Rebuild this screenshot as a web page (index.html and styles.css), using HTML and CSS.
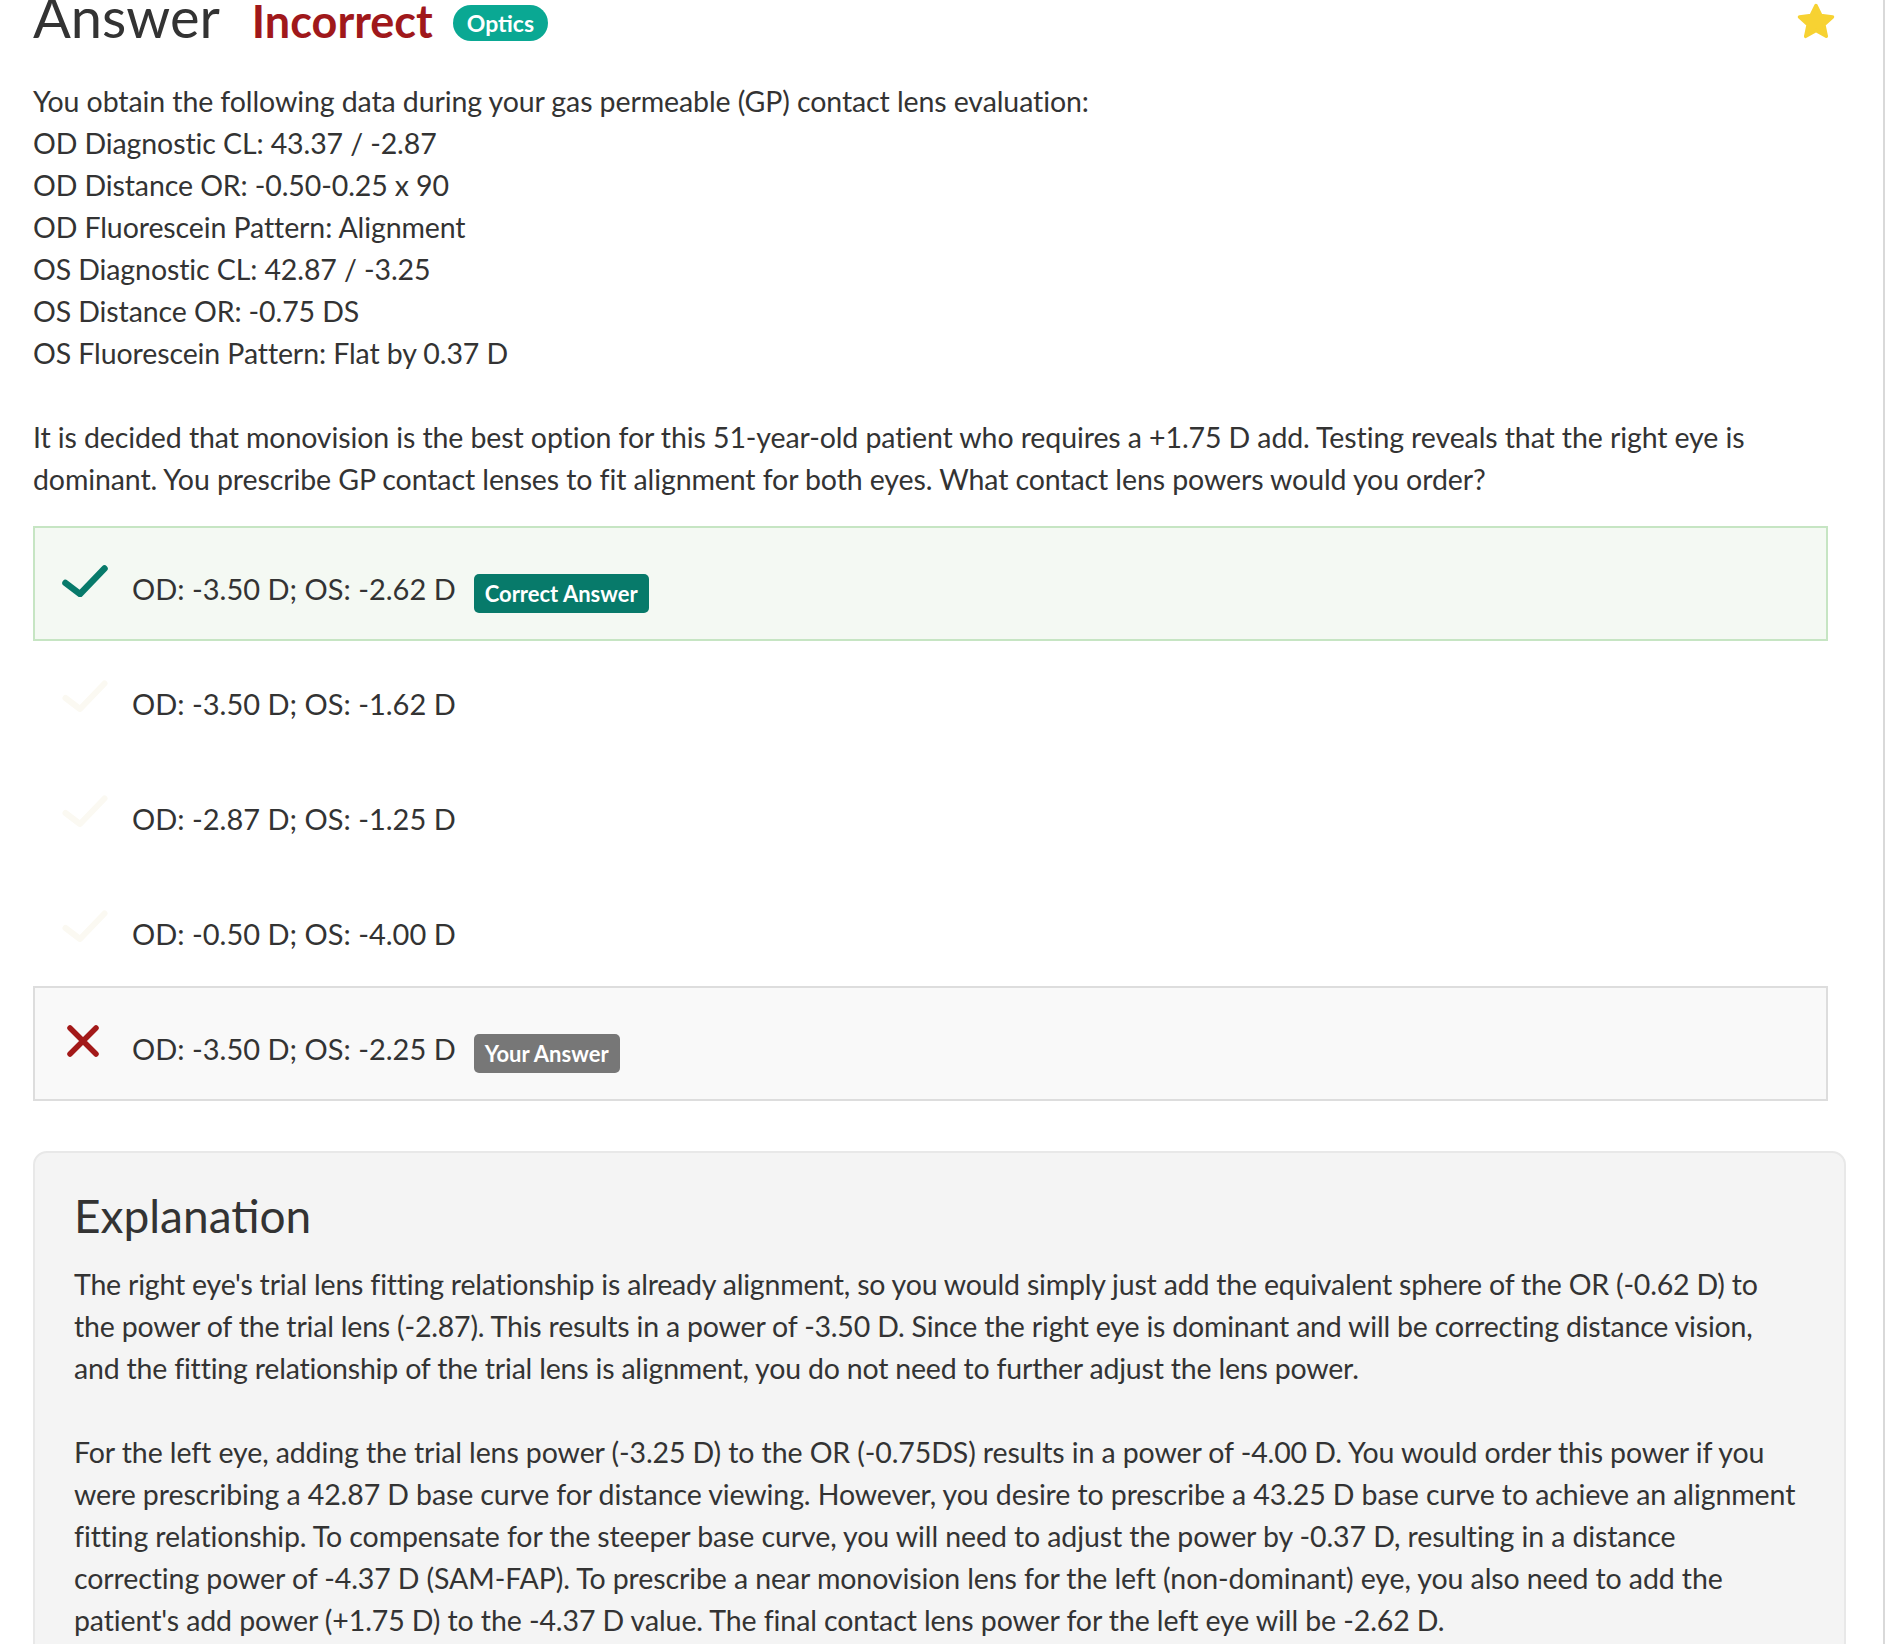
FILE: index.html
```html
<!DOCTYPE html>
<html lang="en">
<head>
<meta charset="utf-8">
<title>Answer</title>
<link rel="stylesheet" href="styles.css">
</head>
<body>
<div class="page">
  <header class="head">
    <h1 class="title">Answer</h1>
    <span class="verdict">Incorrect</span>
    <span class="tag">Optics</span>
    <svg class="star" viewBox="0 0 38 38" aria-hidden="true">
      <path d="M19 2.5 L23.9 12.6 L35.5 13.9 L26.9 21.8 L29.3 33.3 L19 27.5 L8.7 33.3 L11.1 21.8 L2.5 13.9 L14.1 12.6 Z" fill="#f7d232" stroke="#f7d232" stroke-width="3.5" stroke-linejoin="round"/>
    </svg>
  </header>

  <p class="q">You obtain the following data during your gas permeable (GP) contact lens evaluation:<br>OD Diagnostic CL: 43.37 / -2.87<br>OD Distance OR: -0.50-0.25 x 90<br>OD Fluorescein Pattern: Alignment<br>OS Diagnostic CL: 42.87 / -3.25<br>OS Distance OR: -0.75 DS<br>OS Fluorescein Pattern: Flat by 0.37 D</p>
  <p class="q">It is decided that monovision is the best option for this 51-year-old patient who requires a +1.75 D add. Testing reveals that the right eye is dominant. You prescribe GP contact lenses to fit alignment for both eyes. What contact lens powers would you order?</p>

  <ul class="options">
    <li class="opt opt-correct">
      <svg class="mark" viewBox="0 0 46 32" aria-hidden="true"><polyline points="3.5,18 18,29 42.5,3.5" fill="none" stroke="#077a6a" stroke-width="6.5" stroke-linecap="round" stroke-linejoin="round"/></svg>
      <span class="opt-text">OD: -3.50 D; OS: -2.62 D</span>
      <span class="badge badge-correct">Correct Answer</span>
    </li>
    <li class="opt">
      <svg class="mark" viewBox="0 0 46 32" aria-hidden="true"><polyline points="3.5,18 18,29 42.5,3.5" fill="none" stroke="#fbf9f2" stroke-width="6" stroke-linecap="round" stroke-linejoin="round"/></svg>
      <span class="opt-text">OD: -3.50 D; OS: -1.62 D</span>
    </li>
    <li class="opt">
      <svg class="mark" viewBox="0 0 46 32" aria-hidden="true"><polyline points="3.5,18 18,29 42.5,3.5" fill="none" stroke="#fbf9f2" stroke-width="6" stroke-linecap="round" stroke-linejoin="round"/></svg>
      <span class="opt-text">OD: -2.87 D; OS: -1.25 D</span>
    </li>
    <li class="opt">
      <svg class="mark" viewBox="0 0 46 32" aria-hidden="true"><polyline points="3.5,18 18,29 42.5,3.5" fill="none" stroke="#fbf9f2" stroke-width="6" stroke-linecap="round" stroke-linejoin="round"/></svg>
      <span class="opt-text">OD: -0.50 D; OS: -4.00 D</span>
    </li>
    <li class="opt opt-wrong">
      <svg class="mark" viewBox="0 0 46 32" aria-hidden="true"><path d="M8 3 L34 29 M34 3 L8 29" fill="none" stroke="#a31919" stroke-width="5.5" stroke-linecap="round"/></svg>
      <span class="opt-text">OD: -3.50 D; OS: -2.25 D</span>
      <span class="badge badge-yours">Your Answer</span>
    </li>
  </ul>

  <section class="explain">
    <h2 class="explain-title">Explanation</h2>
    <p class="explain-lead">The right eye's trial lens fitting relationship is already alignment, so you would simply just add the equivalent sphere of the OR (-0.62 D) to the power of the trial lens (-2.87). This results in a power of -3.50 D. Since the right eye is dominant and will be correcting distance vision, and the fitting relationship of the trial lens is alignment, you do not need to further adjust the lens power.</p>
    <p>For the left eye, adding the trial lens power (-3.25 D) to the OR (-0.75DS) results in a power of -4.00 D. You would order this power if you were prescribing a 42.87 D base curve for distance viewing. However, you desire to prescribe a 43.25 D base curve to achieve an alignment fitting relationship. To compensate for the steeper base curve, you will need to adjust the power by -0.37 D, resulting in a distance correcting power of -4.37 D (SAM-FAP). To prescribe a near monovision lens for the left (non-dominant) eye, you also need to add the patient's add power (+1.75 D) to the -4.37 D value. The final contact lens power for the left eye will be -2.62 D.</p>
  </section>
</div>
</body>
</html>
```

FILE: styles.css
```css
html, body {
  margin: 0;
  padding: 0;
  background: #ffffff;
}

body {
  font-family: Lato, "Open Sans", sans-serif;
  color: #333333;
  overflow: hidden;
}

.page {
  width: 1813px;
  padding: 0 37px 0 33px;
  border-right: 2px solid #d9d9d9;
  min-height: 1644px;
}

/* header */
.head {
  display: flex;
  align-items: baseline;
  height: 42px;
  margin-bottom: 38px;
}

.title {
  margin: 0;
  font-size: 56px;
  font-weight: 400;
  line-height: 34px;
  color: #333333;
}

.verdict {
  margin-left: 32px;
  font-size: 45px;
  font-weight: 700;
  line-height: 34px;
  color: #a0181b;
}

.tag {
  align-self: flex-start;
  margin-top: 5px;
  margin-left: 20px;
  height: 36px;
  padding: 0 14px;
  border-radius: 18px;
  background: #0aa893;
  color: #ffffff;
  font-size: 23px;
  font-weight: 700;
  line-height: 36px;
}

.star {
  align-self: flex-start;
  margin-top: 3px;
  margin-left: auto;
  margin-right: 10px;
  width: 40px;
  height: 38px;
}

/* question */
.q {
  margin: 0 0 42px;
  font-size: 28.5px;
  letter-spacing: -0.1px;
  line-height: 42px;
}

.q + .q {
  margin-bottom: 26px;
}

/* options */
.options {
  list-style: none;
  margin: 0 18px 0 0;
  padding: 0;
}

.opt {
  display: flex;
  align-items: center;
  box-sizing: border-box;
  height: 115px;
  padding: 10px 0 0 27px;
  border: 2px solid transparent;
  font-size: 29px;
  line-height: 42px;
}

.opt-correct {
  background: #f4f9f3;
  border-color: #c6e5c3;
}

.opt-wrong {
  background: #f9f9f9;
  border-color: #dddddd;
}

.mark {
  align-self: flex-start;
  flex: none;
  width: 46px;
  height: 32px;
  margin-top: 27px;
  margin-right: 24px;
}

.badge {
  margin-left: 18px;
  margin-top: 10px;
  height: 39px;
  padding: 0 11px;
  border-radius: 5px;
  color: #ffffff;
  font-size: 22px;
  font-weight: 700;
  line-height: 39px;
}

.badge-correct {
  background: #077a6a;
}

.badge-yours {
  background: #777777;
}

/* explanation */
.explain {
  margin-top: 50px;
  padding: 35px 45px 60px 39px;
  background: #f4f4f4;
  border: 2px solid #e8e8e8;
  border-radius: 14px;
}

.explain-title {
  margin: 0 0 20px;
  font-size: 46px;
  font-weight: 400;
  line-height: 55px;
  color: #333333;
}

.explain p {
  margin: 0 0 42px;
  font-size: 28.5px;
  letter-spacing: -0.1px;
  line-height: 42px;
}

.explain .explain-lead {
  letter-spacing: -0.2px;
}
```
